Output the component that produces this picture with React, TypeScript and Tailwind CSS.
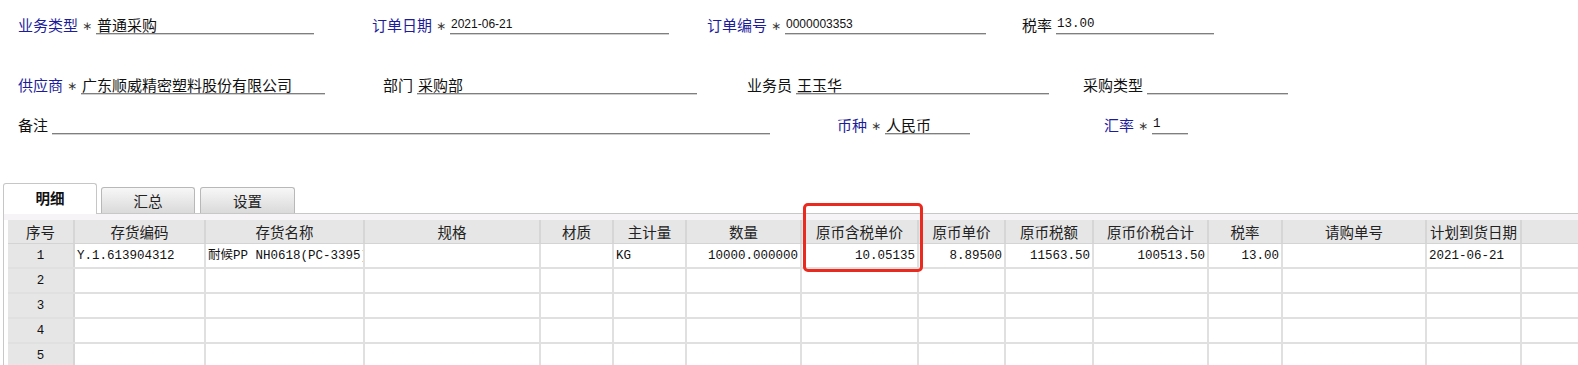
import React from 'react';

type FieldProps = {
    label: string;
    blue?: boolean;
    req?: boolean;
    value?: string;
    kind?: 'cjk' | 'sans' | 'mono';
    cell: string;
    line: string;
};

// form field: label, optional required star, value sitting on an underline
const Field: React.FC<FieldProps> = ({ label, blue, req, value, kind = 'cjk', cell, line }) => {
    const valueClass =
        kind === 'sans'
            ? "block font-['Liberation_Sans',sans-serif] text-[12px] leading-[14px]"
            : kind === 'mono'
                ? "block font-['Liberation_Mono',monospace] text-[12.5px] leading-[14px]"
                : 'block text-[15px] leading-[16px]';
    return (
        <div className={`flex h-[17px] shrink-0 ${cell}`}>
            <span className={`text-[15px] leading-[16px] whitespace-nowrap ${blue ? 'text-[#1d1d9c]' : 'text-[#111]'}`}>{label}</span>
            {req ? (
                <span className="w-[18px] text-center font-['DejaVu_Sans',sans-serif] text-[12px] leading-[16px] pt-[1px] text-[#3a3a3a]">∗</span>
            ) : (
                <span className="w-[4px]" />
            )}
            <div className={`flex items-start h-[17px] leading-[16px] border-b border-[#7f7f7f] shadow-[0_1px_0_#d0d0d0] pl-[1px] whitespace-nowrap text-[#111] ${line}`}>
                {value && <span className={valueClass}>{value}</span>}
            </div>
        </div>
    );
};

type Col = { h: string; w: string; align: 'l' | 'c' | 'r' };

const cols: Col[] = [
    { h: '序号', w: 'w-[67px]', align: 'c' },
    { h: '存货编码', w: 'w-[131px]', align: 'l' },
    { h: '存货名称', w: 'w-[159px]', align: 'l' },
    { h: '规格', w: 'w-[176px]', align: 'l' },
    { h: '材质', w: 'w-[73px]', align: 'l' },
    { h: '主计量', w: 'w-[73px]', align: 'l' },
    { h: '数量', w: 'w-[115px]', align: 'r' },
    { h: '原币含税单价', w: 'w-[117px]', align: 'r' },
    { h: '原币单价', w: 'w-[87px]', align: 'r' },
    { h: '原币税额', w: 'w-[88px]', align: 'r' },
    { h: '原币价税合计', w: 'w-[115px]', align: 'r' },
    { h: '税率', w: 'w-[74px]', align: 'r' },
    { h: '请购单号', w: 'w-[144px]', align: 'l' },
    { h: '计划到货日期', w: 'w-[95px]', align: 'l' },
    { h: '', w: 'w-[140px]', align: 'l' },
];

const firstRow = [
    '1', 'Y.1.613904312', '耐候PP NH0618(PC-3395)', '', '', 'KG', '10000.000000',
    '10.05135', '8.89500', '11563.50', '100513.50', '13.00', '', '2021-06-21', '',
];

const alignClass = { l: 'justify-start pl-[2px]', c: 'justify-center', r: 'justify-end pr-[2px]' };

const App: React.FC = () => {
    const rows = [firstRow, ['2'], ['3'], ['4'], ['5'], ['6']];

    return (
        <div className="relative w-[1578px] h-[365px] overflow-hidden bg-white font-['Noto_Sans_CJK_SC','Noto_Sans',sans-serif]">
            {/* Header form */}
            <div className="flex pl-[18px] pt-[17px]">
                <Field cell="w-[354px]" line="w-[218px]" label="业务类型" blue req value="普通采购" />
                <Field cell="w-[335px]" line="w-[219px]" label="订单日期" blue req value="2021-06-21" kind="sans" />
                <Field cell="w-[315px]" line="w-[201px]" label="订单编号" blue req value="0000003353" kind="sans" />
                <Field cell="w-[300px]" line="w-[158px]" label="税率" value="13.00" kind="mono" />
            </div>
            <div className="flex pl-[18px] mt-[43px]">
                <Field cell="w-[365px]" line="w-[244px]" label="供应商" blue req value="广东顺威精密塑料股份有限公司" />
                <Field cell="w-[364px]" line="w-[280px]" label="部门" value="采购部" />
                <Field cell="w-[336px]" line="w-[253px]" label="业务员" value="王玉华" />
                <Field cell="w-[300px]" line="w-[141px]" label="采购类型" />
            </div>
            <div className="flex pl-[18px] mt-[23px]">
                <Field cell="w-[819px]" line="w-[718px]" label="备注" />
                <Field cell="w-[267px]" line="w-[85px]" label="币种" blue req value="人民币" />
                <Field cell="w-[200px]" line="w-[36px]" label="汇率" blue req value="1" kind="mono" />
            </div>

            {/* Tabs */}
            <div className="flex items-end pl-[3px] mt-[49px] h-[30px]">
                <div className="relative z-10 -mb-px flex h-[31px] w-[94px] items-center justify-center rounded-t-[3px] border border-b-0 border-[#c6c6c6] bg-white pb-[3px] text-[14.5px] font-bold text-[#111]">
                    明细
                </div>
                <div className="ml-[4px] flex h-[26px] w-[94px] items-center justify-center rounded-t-[3px] border border-b-0 border-[#b8b8b8] bg-gradient-to-b from-[#f7f7f7] to-[#dadada] text-[14.5px] text-[#222]">
                    汇总
                </div>
                <div className="ml-[5px] flex h-[26px] w-[95px] items-center justify-center rounded-t-[3px] border border-b-0 border-[#b8b8b8] bg-gradient-to-b from-[#f7f7f7] to-[#dadada] text-[14.5px] text-[#222]">
                    设置
                </div>
            </div>

            {/* Grid panel */}
            <div className="ml-[3px] border-l border-t border-[#c8c8c8]">
                <div className="h-[6px] bg-[#f7f4f7]" />
                <div className="pl-[4px]">
                    <div className="flex h-[24px] border-b border-[#d4d4d4]">
                        {cols.map((c, i) => (
                            <div
                                key={i}
                                className={`${c.w} shrink-0 flex items-center justify-center border-r-2 border-[#d6d6d6] bg-[#e6e6e6] text-[14.5px] leading-[16px] text-[#222] whitespace-nowrap overflow-hidden`}
                            >
                                {c.h}
                            </div>
                        ))}
                    </div>
                    {rows.map((r, ri) => (
                        <div key={ri} className="flex h-[25px] border-b-2 border-[#e0e0e0]">
                            {cols.map((c, i) => (
                                <div
                                    key={i}
                                    className={`${c.w} shrink-0 flex items-center border-r-2 ${i === 0 ? 'border-[#d6d6d6] bg-[#e6e6e6]' : 'border-[#e0e0e0] bg-white'} ${alignClass[c.align]} font-['Liberation_Mono','Noto_Sans_CJK_SC',monospace] text-[12.5px] leading-[14px] text-[#111] whitespace-nowrap overflow-hidden`}
                                >
                                    {r[i] ?? ''}
                                </div>
                            ))}
                        </div>
                    ))}
                </div>
            </div>

            {/* Red highlight around the tax-inclusive unit price */}
            <div className="absolute left-[803px] top-[203px] h-[69px] w-[120px] rounded-[5px] border-[3px] border-[#ea2a1f]" />
        </div>
    );
};

export default App;
